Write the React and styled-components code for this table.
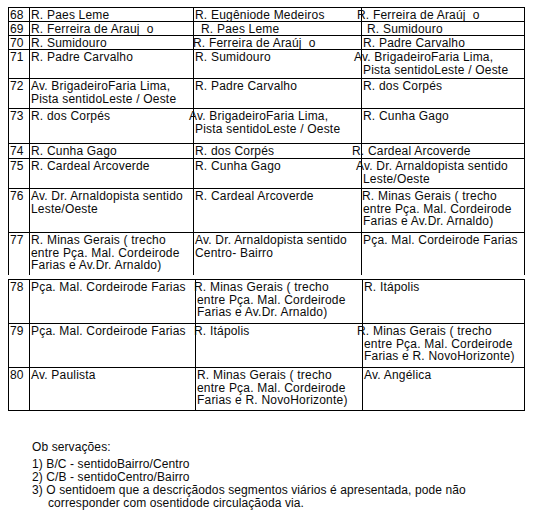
import React from 'react';
import styled, { createGlobalStyle } from 'styled-components';

const GlobalStyle = createGlobalStyle`
  html, body {
    margin: 0;
    padding: 0;
    background: #ffffff;
  }
  body {
    font-family: "Liberation Sans", Arial, sans-serif;
    color: #0a0a0a;
  }
`;

// column widths (border-left included) for the two table pieces
const TOP_COLS = '20px 164px 168px 163px';
const BOTTOM_COLS = '20px 166px 167px 162px';

const topRows = [
    { n: '68', h: 14, c: [['R. Paes Leme'], ['R. Eugêniode Medeiros'], [{ t: 'R. Ferreira de Araúj\u00a0\u00a0o', x: -6 }]] },
    { n: '69', h: 14, c: [['R. Ferreira de Arauj\u00a0\u00a0o'], [{ t: 'R. Paes Leme', x: 6 }], [{ t: 'R. Sumidouro', x: 4 }]] },
    { n: '70', h: 14, c: [['R. Sumidouro'], [{ t: 'R. Ferreira de Araúj\u00a0\u00a0o', x: -2 }], ['R. Padre Carvalho']] },
    { n: '71', h: 29, c: [['R. Padre Carvalho'], ['R. Sumidouro'], [{ t: 'Av. BrigadeiroFaria Lima,', x: -9 }, 'Pista sentidoLeste / Oeste']] },
    { n: '72', h: 30, c: [['Av. BrigadeiroFaria Lima,', 'Pista sentidoLeste / Oeste'], ['R. Padre Carvalho'], ['R. dos Corpés']] },
    { n: '73', h: 35, c: [['R. dos Corpés'], [{ t: 'Av. BrigadeiroFaria Lima,', x: -6 }, 'Pista sentidoLeste / Oeste'], ['R. Cunha Gago']] },
    { n: '74', h: 15, c: [['R. Cunha Gago'], ['R. dos Corpés'], [{ t: 'R. Cardeal Arcoverde', x: -11 }]] },
    { n: '75', h: 30, c: [['R. Cardeal Arcoverde'], ['R. Cunha Gago'], [{ t: 'Av. Dr. Arnaldopista sentido', x: -7 }, 'Leste/Oeste']] },
    { n: '76', h: 44, c: [['Av. Dr. Arnaldopista sentido', 'Leste/Oeste'], ['R. Cardeal Arcoverde'], [{ t: 'R. Minas Gerais ( trecho', x: -1 }, 'entre Pça. Mal. Cordeirode', 'Farias e Av.Dr. Arnaldo)']] },
    { n: '77', h: 42, c: [['R. Minas Gerais ( trecho', 'entre Pça. Mal. Cordeirode', 'Farias e Av.Dr. Arnaldo)'], ['Av. Dr. Arnaldopista sentido', 'Centro- Bairro'], ['Pça. Mal. Cordeirode Farias']] },
];

const bottomRows = [
    { n: '78', h: 44, c: [['Pça. Mal. Cordeirode Farias'], [{ t: 'R. Minas Gerais ( trecho', x: -3 }, 'entre Pça. Mal. Cordeirode', 'Farias e Av.Dr. Arnaldo)'], ['R. Itápolis']] },
    { n: '79', h: 44, c: [['Pça. Mal. Cordeirode Farias'], [{ t: 'R. Itápolis', x: -3 }], [{ t: 'R. Minas Gerais ( trecho', x: -7 }, 'entre Pça. Mal. Cordeirode', 'Farias e R. NovoHorizonte)']] },
    { n: '80', h: 43, c: [['Av. Paulista'], ['R. Minas Gerais ( trecho', 'entre Pça. Mal. Cordeirode', 'Farias e R. NovoHorizonte)'], ['Av. Angélica']] },
];

const notes = [
    { t: '1) B/C -  sentidoBairro/Centro' },
    { t: '2) C/B -  sentidoCentro/Bairro' },
    { t: '3) O sentidoem que a descriçãodos segmentos viários é apresentada, pode não' },
    { t: 'corresponder com osentidode circulaçãoda via.', indent: true },
];

const RenderTable = ({ rows, cols, open }) => (
    <Table>
        {rows.map((row, i) => (
            <Row key={row.n} $h={row.h} $cols={cols} $last={open && i === rows.length - 1}>
                <NumCell>{row.n}</NumCell>
                {row.c.map((lines, j) => (
                    <Cell key={j}>
                        {lines.map((l, k) => {
                            const line = typeof l === 'string' ? { t: l, x: 0 } : l;
                            return <Line key={k} $x={line.x}>{line.t}</Line>;
                        })}
                    </Cell>
                ))}
            </Row>
        ))}
    </Table>
);

const App = () => (
    <>
        <GlobalStyle />
        <Page>
            <RenderTable rows={topRows} cols={TOP_COLS} open />
            <Gap />
            <RenderTable rows={bottomRows} cols={BOTTOM_COLS} />
            <Notes>
                <NotesTitle>Ob servações:</NotesTitle>
                {notes.map(n => (
                    <NoteLine key={n.t} $indent={n.indent}>{n.t}</NoteLine>
                ))}
            </Notes>
        </Page>
    </>
);

export default App;

const Page = styled.div`
    width: 533px;
    height: 523px;
    padding: 7px 0 0 8px;
    box-sizing: border-box;
    overflow: hidden;
`;

const Table = styled.div`
    width: 517px;
    box-sizing: border-box;
    border-top: 1px solid #000;
    border-left: 1px solid #000;
    border-right: 1px solid #000;
`;

const Gap = styled.div`
    height: 4px;
`;

const Row = styled.div`
    display: grid;
    grid-template-columns: ${props => props.$cols};
    height: ${props => props.$h}px;
    box-sizing: border-box;
    border-bottom: ${props => (props.$last ? 'none' : '1px solid #000')};
`;

const NumCell = styled.div`
    font-size: 12px;
    line-height: 12.5px;
    letter-spacing: 0.1px;
    padding: 1px 0 0 1px;
    white-space: nowrap;
`;

const Cell = styled.div`
    border-left: 1px solid #000;
    padding: 1px 0 0 1px;
    font-size: 12px;
    line-height: 12.5px;
    letter-spacing: 0.2px;
    white-space: nowrap;
    min-width: 0;
`;

const Line = styled.div`
    margin-left: ${props => props.$x || 0}px;
`;

const Notes = styled.div`
    margin-top: 30px;
    padding-left: 24px;
    font-size: 12px;
    line-height: 13px;
    letter-spacing: 0.1px;
    white-space: nowrap;
`;

const NotesTitle = styled.div`
    margin-bottom: 4px;
`;

const NoteLine = styled.div`
    padding-left: ${props => (props.$indent ? '16px' : '0')};
`;
